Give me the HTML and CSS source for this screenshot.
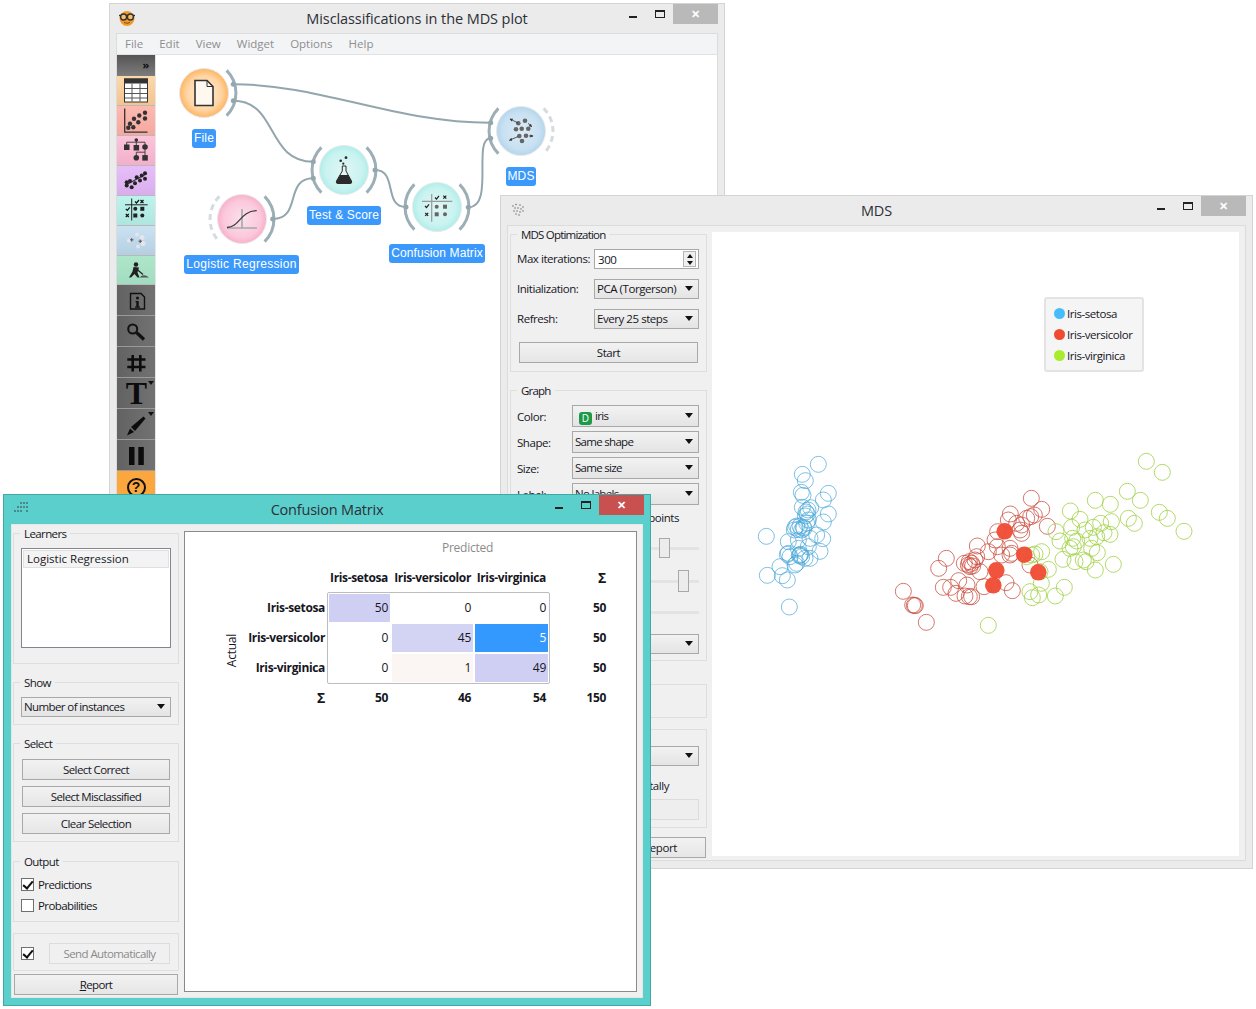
FILE: index.html
```html
<!DOCTYPE html>
<html lang="en">
<head>
<meta charset="utf-8">
<title>Misclassifications in the MDS plot</title>
<link rel="stylesheet" href="styles.css">
</head>
<body>
<div class="desktop">

<section class="win win-canvas">
  <header class="titlebar">
    <svg class="logo" viewBox="0 0 18 18" width="18" height="18"><circle cx="9" cy="9.500" r="7.500" fill="#f09a2c"/><path d="M1 6.500h16" stroke="#333" stroke-width="1.400"/><circle cx="5.600" cy="8" r="3" fill="#f8c070" stroke="#333" stroke-width="1.400"/><circle cx="12.400" cy="8" r="3" fill="#f8c070" stroke="#333" stroke-width="1.400"/><path d="M6 13.500q3 1.500 6 0" stroke="#8a4a10" fill="none"/></svg>
    <h1 class="title">Misclassifications in the MDS plot</h1>
    <div class="ctls"><i class="c-min"></i><i class="c-max"></i><b class="c-close idle">&#x2715;</b></div>
  </header>
  <div class="canvas-body">
    <nav class="menu"><span>File</span><span>Edit</span><span>View</span><span>Widget</span><span>Options</span><span>Help</span></nav>
    <div class="workspace">
      <aside class="dock">
        <div class="tool t-head"><span class="more">&raquo;</span></div>
        <div class="tool t-data"><svg class="ti" viewBox="117 76 38 29"><rect x="124.500" y="78.500" width="23" height="23" fill="#fff" stroke="#333"/><rect x="124" y="78" width="24" height="5" fill="#333"/><path d="M132 83v18M140 83v18M125 88h22M125 93h22M125 97.500h22" stroke="#555"/></svg></div>
        <div class="tool t-vis"><svg class="ti" viewBox="117 106 38 29"><path d="M124.700 108V131.700H147.500" fill="none" stroke="#333" stroke-width="1.300"/><g fill="#333"><circle cx="145" cy="112.300" r="2.200"/><circle cx="139.300" cy="115" r="2.200"/><circle cx="145" cy="118" r="2.200"/><circle cx="134" cy="118.300" r="2.200"/><circle cx="138.300" cy="121.700" r="2.200"/><circle cx="130" cy="123.300" r="2.200"/><circle cx="133.300" cy="126.700" r="2.200"/><circle cx="128.300" cy="127.300" r="2.200"/></g></svg></div>
        <div class="tool t-model"><svg class="ti" viewBox="117 136 38 29"><path d="M136.300 139v8M126.700 141.700H145V147M126.700 141.700V147M145 148v9M136.300 151.700H145M136.300 151.700V157" fill="none" stroke="#444"/><g fill="#333"><circle cx="136.300" cy="139.500" r="1.800"/><rect x="124" y="144" width="5.500" height="5.500"/><rect x="133.600" y="144.500" width="5.500" height="5.500"/><circle cx="145" cy="146.500" r="2.800"/><circle cx="136.300" cy="157.300" r="2.800"/><rect x="142.300" y="154.600" width="5.500" height="5.500"/></g></svg></div>
        <div class="tool t-unsup"><svg class="ti" viewBox="117 166 38 29"><path d="M125 185L147 173" stroke="#333" stroke-width="1.200"/><g fill="#222"><circle cx="126.700" cy="181.700" r="2"/><circle cx="131.700" cy="186.700" r="2"/><circle cx="130" cy="180.500" r="2"/><circle cx="135" cy="182.700" r="2"/><circle cx="136.700" cy="176.700" r="2"/><circle cx="140" cy="180" r="2"/><circle cx="141.700" cy="175" r="2"/><circle cx="145" cy="172.700" r="2"/><circle cx="145" cy="178.300" r="2"/><circle cx="126.700" cy="185" r="2"/></g></svg></div>
        <div class="tool t-eval"><svg class="ti" viewBox="117 196 38 29"><path d="M131.700 198V220M125 204.300H147.700" stroke="#222"/><path d="M135 201l1.500 1.500 2.500-3M125.800 208.300l1.500 1.500 2.500-3" fill="none" stroke="#111" stroke-width="1.200"/><path d="M140.500 199.500l3 3M143.500 199.500l-3 3M125.800 213.500l3 3M128.800 213.500l-3 3" stroke="#111" stroke-width="1.200"/><g fill="#222"><circle cx="135.300" cy="208.300" r="2"/><rect x="140.300" y="206.300" width="4" height="4"/><rect x="133.300" y="213" width="4" height="4"/><circle cx="142.300" cy="215" r="2"/></g></svg></div>
        <div class="tool t-blue"><svg class="ti" viewBox="117 226 38 29"><g fill="#e2e6ea"><circle cx="129" cy="240" r="2"/><circle cx="137" cy="234" r="2"/><circle cx="142" cy="237" r="2.500"/><circle cx="143" cy="243" r="2.500"/><circle cx="138" cy="246" r="2"/></g><path d="M130 239.300h3.500M131.700 237.600v3.500M138.500 240.700h3.500M140.200 239v3.500" stroke="#555"/></svg></div>
        <div class="tool t-green"><svg class="ti" viewBox="117 256 38 29"><circle cx="136" cy="264" r="2.200" fill="#222"/><path d="M133.500 266.500L139 267 137.500 272 139.500 277H137.500L134.500 273.500 131 277H129L132.500 271Z" fill="#222"/><path d="M136 268L143 274" stroke="#222" stroke-width="1.200"/><path d="M139.500 277Q143.500 272.500 149 277Z" fill="#555"/></svg></div>
        <div class="tool t-grey"><svg class="ti" viewBox="117 285 38 30"><path d="M130.500 293.500H141L144.500 297V309H130.500Z" fill="none" stroke="#111" stroke-width="1.400"/><circle cx="137.500" cy="298" r="1.500" fill="#111"/><path d="M135.500 301H138.700V306.500H140V307.700H135V306.500H136.300V302.200H135.500Z" fill="#111"/></svg></div>
        <div class="tool t-grey"><svg class="ti" viewBox="117 316 38 30"><circle cx="132.700" cy="329" r="4.500" fill="none" stroke="#111" stroke-width="2"/><path d="M136.500 332.500L144 339.500" stroke="#111" stroke-width="3.200"/></svg></div>
        <div class="tool t-grey"><svg class="ti" viewBox="117 347 38 30"><path d="M132.700 355V371.500M140.300 355V371.500M127.300 359.500H145.500M127.300 367H145.500" stroke="#0c0c0c" stroke-width="2.600"/></svg></div>
        <div class="tool t-grey"><svg class="ti" viewBox="117 378 38 30"><text x="136.500" y="404" class="t-glyph">T</text><path d="M148 381h6l-3 4z" fill="#111"/></svg></div>
        <div class="tool t-grey"><svg class="ti" viewBox="117 409 38 30"><path d="M143.500 416.500L145.500 418.500 135 431 131 427Z" fill="#0c0c0c"/><path d="M130 428.500L127 435.500 134 432Z" fill="#0c0c0c"/><path d="M148 412h6l-3 4z" fill="#111"/></svg></div>
        <div class="tool t-grey"><svg class="ti" viewBox="117 440 38 30"><rect x="129" y="447" width="5.500" height="18" fill="#0c0c0c"/><rect x="138.300" y="447" width="5.500" height="18" fill="#0c0c0c"/></svg></div>
        <div class="tool t-help"><span class="q">?</span></div>
      </aside>
      <div class="diagram">
        <svg class="links" viewBox="156 55 561 460" width="561" height="460">
          <defs>
            <radialGradient id="g-orange"><stop offset="0" stop-color="#ffeedb"/><stop offset=".7" stop-color="#ffd5a4"/><stop offset="1" stop-color="#ffb560"/></radialGradient>
            <radialGradient id="g-teal"><stop offset="0" stop-color="#e0f6f5"/><stop offset=".75" stop-color="#c9f3f0"/><stop offset="1" stop-color="#aeeeea"/></radialGradient>
            <radialGradient id="g-pink"><stop offset="0" stop-color="#fce0ea"/><stop offset=".75" stop-color="#fbc8db"/><stop offset="1" stop-color="#f9afcb"/></radialGradient>
            <radialGradient id="g-blue"><stop offset="0" stop-color="#dcecf6"/><stop offset=".75" stop-color="#c8e0f1"/><stop offset="1" stop-color="#b2d6ed"/></radialGradient>
            <marker id="ah" viewBox="0 0 6 6" refX="5" refY="3" markerWidth="4" markerHeight="4" orient="auto"><path d="M0 0L6 3L0 6Z" fill="#333"/></marker>
          </defs>
          <g class="link">
            <path d="M233.300 84.300C320 84 395 123 490.700 122.700"/>
            <path d="M233.300 100.700C278 100.700 266 161.700 313.300 161.700"/>
            <path d="M272.700 219C302 219 284 178.300 313.300 178.300"/>
            <path d="M375 170C398 170 383 207 406 207"/>
            <path d="M468.300 207.300C495 207 472 138.300 490.700 138.300"/>
          </g>
          <g class="arc">
            <path d="M226.600 70.400A32 32 0 0 1 226.600 115.600"/>
            <path d="M321.400 147.400A32 32 0 0 0 321.400 192.600"/>
            <path d="M366.600 147.400A32 32 0 0 1 366.600 192.600"/>
            <path d="M264.600 196.400A32 32 0 0 1 264.600 241.600"/>
            <path d="M414.400 184.400A32 32 0 0 0 414.400 229.600"/>
            <path d="M459.600 184.400A32 32 0 0 1 459.600 229.600"/>
            <path d="M498.400 108.400A32 32 0 0 0 498.400 153.600"/>
          </g>
          <g class="arc-off">
            <path d="M219.400 196.400A32 32 0 0 0 219.400 241.600"/>
            <path d="M543.600 108.400A32 32 0 0 1 543.600 153.600"/>
          </g>
          <g class="anchor">
            <circle cx="233.300" cy="84.300" r="2.500"/><circle cx="233.300" cy="100.700" r="2.500"/>
            <circle cx="313.300" cy="161.700" r="2.500"/><circle cx="313.300" cy="178.300" r="2.500"/><circle cx="375" cy="170" r="2.500"/>
            <circle cx="272.700" cy="219" r="2.500"/><circle cx="406" cy="207" r="2.500"/><circle cx="468.300" cy="207.300" r="2.500"/>
            <circle cx="490.700" cy="122.700" r="2.500"/><circle cx="490.700" cy="138.300" r="2.500"/>
          </g>
          <g class="node">
            <circle cx="204" cy="93" r="24.500" fill="url(#g-orange)"/>
            <circle cx="344" cy="170" r="24.500" fill="url(#g-teal)"/>
            <circle cx="242" cy="219" r="24.500" fill="url(#g-pink)"/>
            <circle cx="437" cy="207" r="24.500" fill="url(#g-teal)"/>
            <circle cx="521" cy="131" r="24.500" fill="url(#g-blue)"/>
          </g>
          <path d="M195 80.500H207L213 86.500V105.500H195Z" fill="#fff8ee" stroke="#333" stroke-width="1.600"/>
          <path d="M207 80.500V86.500H213" fill="none" stroke="#333"/>
          <g fill="#2b2b2b"><circle cx="340.700" cy="160.700" r="1.300"/><circle cx="346" cy="157.700" r="1.400"/><circle cx="343.300" cy="163.700" r="1.100"/></g>
          <path d="M342.300 166H346V171L351.500 181Q352.500 183.500 350 183.500H338Q335.500 183.500 336.500 181L342.300 171Z" fill="#e0f6f5" stroke="#2b2b2b"/>
          <path d="M340 175H348L351.500 181Q352.500 183.500 350 183.500H338Q335.500 183.500 336.500 181Z" fill="#2b2b2b"/>
          <path d="M242 209V228.500M227 228H257" stroke="#a3a9ab" stroke-width="1.600" fill="none"/>
          <path d="M227 227.500C240 227 240 211 256.700 210.700" stroke="#3c3c3c" stroke-width="1.300" fill="none"/>
          <path d="M431.700 194V221.700M422 201.300H452.300" stroke="#999" stroke-width="1.200"/>
          <path d="M435 197.500l1.500 1.500 2.500-3.200M425 206l1.500 1.500 2.500-3.200" fill="none" stroke="#222" stroke-width="1.200"/>
          <path d="M443.300 195.700l3 3M446.300 195.700l-3 3M425.200 212.800l3 3M428.200 212.800l-3 3" stroke="#222" stroke-width="1.200"/>
          <g fill="#666"><circle cx="436.700" cy="206.700" r="2"/><rect x="443" y="204.700" width="4" height="4"/><rect x="434.700" y="212.300" width="4" height="4"/><circle cx="445" cy="214.300" r="2"/></g>
          <g fill="#666"><circle cx="525" cy="120.700" r="2.300"/><circle cx="518.300" cy="123.300" r="2.300"/><circle cx="516" cy="129.300" r="2.300"/><circle cx="521.700" cy="128.700" r="2.300"/><circle cx="528.300" cy="128.700" r="2.300"/><circle cx="519.300" cy="136" r="2.300"/><circle cx="526" cy="135.700" r="2.300"/><circle cx="522" cy="141" r="2.300"/></g>
          <g stroke="#333" stroke-width=".8" marker-end="url(#ah)"><path d="M518 123L510 119"/><path d="M528 123.300L531.700 126.700"/><path d="M529 136H533"/><path d="M518 136.500L509.500 140.300"/></g>
        </svg>
        <span class="tag tag-file">File</span>
        <span class="tag tag-test">Test &amp; Score</span>
        <span class="tag tag-lr">Logistic Regression</span>
        <span class="tag tag-cm">Confusion Matrix</span>
        <span class="tag tag-mds">MDS</span>
      </div>
    </div>
  </div>
</section>

<section class="win win-mds">
  <header class="titlebar">
    <svg class="small-icon" viewBox="0 0 14 14" width="14" height="14"><g fill="#777"><circle cx="2" cy="3" r=".8"/><circle cx="5" cy="1.500" r=".8"/><circle cx="9" cy="2" r=".8"/><circle cx="12" cy="4" r=".8"/><circle cx="4" cy="5" r=".8"/><circle cx="7" cy="5" r=".8"/><circle cx="10" cy="6" r=".8"/><circle cx="3" cy="8" r=".8"/><circle cx="6" cy="8" r=".8"/><circle cx="9" cy="9" r=".8"/><circle cx="12" cy="8" r=".8"/><circle cx="5" cy="11" r=".8"/><circle cx="8" cy="12" r=".8"/></g></svg>
    <h1 class="title">MDS</h1>
    <div class="ctls"><i class="c-min"></i><i class="c-max"></i><b class="c-close idle">&#x2715;</b></div>
  </header>
  <div class="mds-body">
    <div class="mds-side">
      <fieldset class="grp g-opt">
        <legend>MDS Optimization</legend>
        <div class="frow"><label>Max iterations:</label><div class="spin"><span>300</span><span class="spin-btns"><i class="up"></i><i class="dn"></i></span></div></div>
        <div class="frow"><label>Initialization:</label><div class="combo">PCA (Torgerson)</div></div>
        <div class="frow"><label>Refresh:</label><div class="combo">Every 25 steps</div></div>
        <button class="btn start">Start</button>
      </fieldset>
      <fieldset class="grp g-graph">
        <legend>Graph</legend>
        <div class="grow"><label>Color:</label><div class="combo tall"><span class="d-badge">D</span>iris</div></div>
        <div class="grow"><label>Shape:</label><div class="combo tall">Same shape</div></div>
        <div class="grow"><label>Size:</label><div class="combo tall">Same size</div></div>
        <div class="grow"><label>Label:</label><div class="combo tall">No labels</div></div>
        <div class="only">points</div>
        <div class="slider s1"><i class="handle"></i></div>
        <div class="slider s2"><i class="handle"></i></div>
        <div class="slider s3"></div>
        <div class="combo low"></div>
      </fieldset>
      <fieldset class="grp g-zoom"></fieldset>
      <fieldset class="grp g-out">
        <div class="combo out-combo"></div>
        <div class="auto-text">tally</div>
        <div class="dis-box"></div>
      </fieldset>
      <button class="btn mds-report">Report</button>
    </div>
    <div class="plot">
      <svg class="scatter" viewBox="712 232 527 624" width="527" height="624">
        <g class="pts blue" transform="translate(740 440) scale(.33333)">
          <circle cx="235" cy="73"/><circle cx="187" cy="103"/><circle cx="196" cy="122"/><circle cx="265" cy="160"/><circle cx="184" cy="157"/><circle cx="189" cy="166"/><circle cx="250" cy="180"/><circle cx="187" cy="202"/><circle cx="212" cy="203"/><circle cx="204" cy="210"/><circle cx="198" cy="216"/><circle cx="202" cy="222"/><circle cx="196" cy="228"/><circle cx="265" cy="222"/><circle cx="250" cy="246"/><circle cx="170" cy="258"/><circle cx="165" cy="262"/><circle cx="180" cy="258"/><circle cx="190" cy="262"/><circle cx="200" cy="250"/><circle cx="185" cy="270"/><circle cx="175" cy="268"/><circle cx="192" cy="265"/><circle cx="205" cy="240"/><circle cx="79" cy="289"/><circle cx="163" cy="270"/><circle cx="248" cy="296"/><circle cx="230" cy="285"/><circle cx="210" cy="295"/><circle cx="175" cy="300"/><circle cx="145" cy="305"/><circle cx="240" cy="334"/><circle cx="145" cy="340"/><circle cx="142" cy="343"/><circle cx="180" cy="345"/><circle cx="182" cy="343"/><circle cx="178" cy="347"/><circle cx="185" cy="350"/><circle cx="170" cy="370"/><circle cx="120" cy="380"/><circle cx="210" cy="355"/><circle cx="195" cy="355"/><circle cx="165" cy="375"/><circle cx="150" cy="350"/><circle cx="82" cy="406"/><circle cx="127" cy="407"/><circle cx="142" cy="420"/><circle cx="148" cy="501"/><circle cx="205" cy="320"/><circle cx="175" cy="325"/>
        </g>
        <g class="pts red" transform="translate(880 440) scale(.33333)">
          <circle cx="70" cy="454"/><circle cx="98" cy="495"/><circle cx="103" cy="496"/><circle cx="106" cy="497"/><circle cx="139" cy="547"/><circle cx="176" cy="385"/><circle cx="199" cy="355"/><circle cx="190" cy="442"/><circle cx="212" cy="442"/><circle cx="228" cy="460"/><circle cx="236" cy="422"/><circle cx="255" cy="468"/><circle cx="268" cy="470"/><circle cx="275" cy="470"/><circle cx="261" cy="435"/><circle cx="253" cy="370"/><circle cx="268" cy="365"/><circle cx="275" cy="370"/><circle cx="285" cy="360"/><circle cx="290" cy="350"/><circle cx="270" cy="380"/><circle cx="265" cy="375"/><circle cx="278" cy="378"/><circle cx="292" cy="318"/><circle cx="300" cy="395"/><circle cx="325" cy="335"/><circle cx="312" cy="440"/><circle cx="352" cy="320"/><circle cx="345" cy="300"/><circle cx="378" cy="428"/><circle cx="397" cy="452"/><circle cx="365" cy="345"/><circle cx="390" cy="345"/><circle cx="395" cy="340"/><circle cx="390" cy="325"/><circle cx="353" cy="275"/><circle cx="385" cy="240"/><circle cx="391" cy="222"/><circle cx="410" cy="250"/><circle cx="425" cy="255"/><circle cx="425" cy="280"/><circle cx="420" cy="270"/><circle cx="440" cy="235"/><circle cx="452" cy="230"/><circle cx="463" cy="225"/><circle cx="485" cy="208"/><circle cx="454" cy="175"/><circle cx="502" cy="259"/><circle cx="450" cy="375"/>
        </g>
        <g class="pts green" transform="translate(880 440) scale(.33333)">
          <circle cx="799" cy="64"/><circle cx="847" cy="97"/><circle cx="742" cy="154"/><circle cx="646" cy="181"/><circle cx="691" cy="193"/><circle cx="781" cy="181"/><circle cx="838" cy="217"/><circle cx="862" cy="235"/><circle cx="912" cy="274"/><circle cx="745" cy="235"/><circle cx="763" cy="250"/><circle cx="694" cy="245"/><circle cx="662" cy="250"/><circle cx="640" cy="262"/><circle cx="615" cy="270"/><circle cx="600" cy="238"/><circle cx="571" cy="213"/><circle cx="528" cy="275"/><circle cx="540" cy="303"/><circle cx="575" cy="262"/><circle cx="578" cy="295"/><circle cx="590" cy="303"/><circle cx="580" cy="320"/><circle cx="570" cy="325"/><circle cx="635" cy="325"/><circle cx="652" cy="338"/><circle cx="690" cy="283"/><circle cx="672" cy="278"/><circle cx="650" cy="290"/><circle cx="630" cy="295"/><circle cx="549" cy="358"/><circle cx="585" cy="365"/><circle cx="610" cy="360"/><circle cx="618" cy="365"/><circle cx="646" cy="390"/><circle cx="700" cy="373"/><circle cx="505" cy="388"/><circle cx="485" cy="335"/><circle cx="465" cy="342"/><circle cx="455" cy="345"/><circle cx="440" cy="350"/><circle cx="484" cy="430"/><circle cx="450" cy="455"/><circle cx="476" cy="465"/><circle cx="457" cy="473"/><circle cx="526" cy="468"/><circle cx="553" cy="442"/><circle cx="325" cy="556"/><circle cx="480" cy="395"/>
        </g>
        <g class="hits">
          <circle cx="1004.700" cy="531.300" r="8.300"/><circle cx="1024.300" cy="554.700" r="8.300"/><circle cx="996.300" cy="570.300" r="8.300"/><circle cx="993.300" cy="585.300" r="8.300"/><circle cx="1038.300" cy="572.300" r="8.300"/>
        </g>
      </svg>
      <div class="legend-box">
        <div class="leg"><i class="dot d-s"></i>Iris-setosa</div>
        <div class="leg"><i class="dot d-v"></i>Iris-versicolor</div>
        <div class="leg"><i class="dot d-g"></i>Iris-virginica</div>
      </div>
    </div>
  </div>
</section>

<section class="win win-cm">
  <header class="titlebar">
    <svg class="small-icon cm-icon" viewBox="0 0 14 14" width="14" height="14"><g fill="#4a6f70"><circle cx="7" cy="2" r="1"/><circle cx="10" cy="2" r="1"/><circle cx="13" cy="2" r="1"/><circle cx="4" cy="6" r="1"/><circle cx="7" cy="6" r="1"/><circle cx="10" cy="6" r="1"/><circle cx="13" cy="6" r="1"/><circle cx="1" cy="10" r="1"/><circle cx="4" cy="10" r="1"/><circle cx="7" cy="10" r="1"/><circle cx="13" cy="10" r="1"/></g></svg>
    <h1 class="title">Confusion Matrix</h1>
    <div class="ctls"><i class="c-min"></i><i class="c-max"></i><b class="c-close alert">&#x2715;</b></div>
  </header>
  <div class="cm-body">
    <div class="cm-side">
      <fieldset class="grp g-learn">
        <legend>Learners</legend>
        <div class="listbox"><div class="list-item">Logistic Regression</div></div>
      </fieldset>
      <fieldset class="grp g-show">
        <legend>Show</legend>
        <div class="combo">Number of instances</div>
      </fieldset>
      <fieldset class="grp g-sel">
        <legend>Select</legend>
        <button class="btn">Select Correct</button>
        <button class="btn">Select Misclassified</button>
        <button class="btn">Clear Selection</button>
      </fieldset>
      <fieldset class="grp g-output">
        <legend>Output</legend>
        <div class="chk"><i class="box on"></i>Predictions</div>
        <div class="chk"><i class="box"></i>Probabilities</div>
      </fieldset>
      <div class="grp g-auto">
        <i class="box on"></i>
        <button class="btn off">Send Automatically</button>
      </div>
      <button class="btn cm-report"><u>R</u>eport</button>
    </div>
    <div class="cm-main">
      <div class="matrix">
        <div class="predicted">Predicted</div>
        <div class="actual"><span>Actual</span></div>
        <div class="frame">
          <div class="cell c-hi">50</div><div class="cell">0</div><div class="cell">0</div>
          <div class="cell">0</div><div class="cell c-hi2">45</div><div class="cell c-sel">5</div>
          <div class="cell">0</div><div class="cell c-lo">1</div><div class="cell c-hi">49</div>
        </div>
        <div class="corner"></div>
        <div class="h hc">Iris-setosa</div><div class="h hc">Iris-versicolor</div><div class="h hc">Iris-virginica</div><div class="h hc s sig">&Sigma;</div>
        <div class="h r">Iris-setosa</div><div class="h s">50</div>
        <div class="h r">Iris-versicolor</div><div class="h s">50</div>
        <div class="h r">Iris-virginica</div><div class="h s">50</div>
        <div class="h r sig">&Sigma;</div><div class="h">50</div><div class="h">46</div><div class="h">54</div><div class="h s">150</div>
      </div>
    </div>
  </div>
</section>

</div>
</body>
</html>
```
FILE: styles.css
```css
* { box-sizing: border-box; }
html, body { margin: 0; padding: 0; background: #fff; }
body { font-family: "Open Sans", "Noto Sans", sans-serif; font-size: 11.5px; letter-spacing: -.25px; color: #16161e; }
.desktop { position: relative; width: 1256px; height: 1009px; overflow: hidden; }

/* windows on the desktop */
.win { position: absolute; border: 1px solid #d4d4d4; background: #ebebeb; display: flex; flex-direction: column; }
.win-canvas { left: 109px; top: 3px; width: 616px; height: 510px; z-index: 1; }
.win-mds { left: 500px; top: 195px; width: 753px; height: 674px; z-index: 2; }
.win-cm { left: 3px; top: 494px; width: 648px; height: 512px; z-index: 3; background: #5bcfcb; border-color: #3fa9a6; }

.titlebar { display: grid; grid-template-columns: 1fr auto 1fr; align-items: start; height: 29px; flex: none; }
.title { margin: 0; font-weight: 400; font-size: 14.5px; line-height: 20px; padding-top: 5px; letter-spacing: -.09px; color: #2c3038; }
.win-cm .title { letter-spacing: -.2px; }
.logo { margin: 5px 0 0 8px; }
.small-icon { margin: 7px 0 0 10px; }
.cm-icon { margin: 6px 0 0 10px; }
.ctls { grid-column: 3; justify-self: end; display: flex; align-items: flex-start; margin-right: 6px; }
.c-min { width: 8px; height: 2px; background: #222; margin: 12px 18px 0 0; }
.c-max { width: 10px; height: 8px; border: 1px solid #222; border-top-width: 2px; margin: 6px 8px 0 0; }
.c-close { width: 45px; height: 20px; color: #fff; font-weight: 700; font-size: 11px; line-height: 20px; text-align: center; }
.c-close.idle { background: #b9b9b9; }
.c-close.alert { background: #c8504f; }

/* canvas window */
.canvas-body { margin: 0 6px; flex: 1; min-height: 0; border: 1px solid #dcdcdc; border-bottom: 0; background: #fff; display: flex; flex-direction: column; }
.menu { display: flex; gap: 16px; height: 21px; flex: none; padding: 0 0 2px 8px; align-items: center; background: #f3f4f6; border-bottom: 1px solid #e2e2e2; color: #8e8e8e; font-size: 11.5px; letter-spacing: 0; }
.workspace { display: flex; flex: 1; min-height: 0; }
.dock { width: 39px; flex: none; border-right: 1px solid #e6e6e6; background: #ebebeb; display: flex; flex-direction: column; }
.tool { height: 31px; flex: none; border-bottom: 1px solid #b9b9b9; display: block; }
.ti { width: 38px; height: 30px; display: block; overflow: visible; }
.t-head { height: 21px; background: linear-gradient(#555, #7c7c7c); text-align: right; border: 0; }
.more { color: #111; font-size: 11px; line-height: 20px; padding-right: 6px; font-weight: 700; }
.t-data { height: 30px; background: linear-gradient(#fbd9ab, #f3c48f); }
.t-vis { height: 30px; background: linear-gradient(#fdb9b0, #f5a9a0); }
.t-model { height: 30px; background: linear-gradient(#fdc4da, #f3afca); }
.t-unsup { height: 30px; background: linear-gradient(#e6bff9, #d9adee); }
.t-eval { height: 30px; background: linear-gradient(#bdf3ec, #aee6df); }
.t-blue { height: 30px; background: linear-gradient(#cbe2f2, #b5cfe2); }
.t-green { height: 29px; background: linear-gradient(#aee6ca, #a2dcc0); }
.t-grey { background: linear-gradient(90deg, #626262, #727272); border-bottom-color: #9a9a9a; }
.t-help { height: 40px; background: #fca63e; border: 0; text-align: center; }
.q { display: inline-block; width: 19px; height: 19px; margin-top: 7px; border: 2px solid #111; border-radius: 50%; font: 700 14px/15px "Liberation Sans", sans-serif; color: #111; letter-spacing: 0; }
.t-glyph { font: 700 32px "Liberation Serif", serif; text-anchor: middle; fill: #0c0c0c; letter-spacing: 0; }

.diagram { position: relative; flex: 1; min-width: 0; background: #fff; overflow: hidden; }
.links { display: block; }
.link path { fill: none; stroke: #93a6ae; stroke-width: 2; }
.arc path { fill: none; stroke: #9caeb6; stroke-width: 3; }
.arc-off path { fill: none; stroke: #d4dcdf; stroke-width: 3; stroke-dasharray: 6 4; }
.anchor circle { fill: #93a6ae; }
.node circle { stroke: #e9e9e9; stroke-width: 1; }
.tag { position: absolute; height: 19px; padding: 0; background: #3b99fc; color: #fff; border-radius: 3px; font: 12px/19px "Liberation Sans", sans-serif; letter-spacing: .18px; white-space: nowrap; }
.tag-file { left: 36px; top: 74px; width: 24px; text-align: center; }
.tag-test { left: 151px; top: 151px; width: 74px; text-align: center; }
.tag-lr { left: 28px; top: 200px; width: 115px; text-align: center; letter-spacing: .3px; }
.tag-cm { left: 233px; top: 189px; width: 96px; text-align: center; letter-spacing: .1px; }
.tag-mds { left: 350px; top: 112px; width: 30px; text-align: center; }

/* shared controls */
.grp { margin: 0; min-width: 0; border: 1px solid #dedede; padding: 0; background: #f0f0f0; }
.grp legend { margin-left: 0; padding: 0 4px; height: 16px; line-height: 18px; color: #16161e; }
.combo { position: relative; height: 20px; line-height: 18px; padding-left: 2px; border: 1px solid #a8a8a8; background: linear-gradient(#f2f2f2, #e4e4e4); white-space: nowrap; overflow: hidden; }
.combo::after { content: ""; position: absolute; right: 5px; top: 6px; border: 4px solid transparent; border-top: 5px solid #111; border-bottom: 0; }
.btn { display: block; font: inherit; letter-spacing: inherit; color: inherit; height: 21px; padding: 0; border: 1px solid #a8a8a8; background: linear-gradient(#f2f2f2, #e6e6e6); text-align: center; }
.btn.off { color: #8b8b8b; background: #f0f0f0; border-color: #dcdcdc; }

/* MDS window */
.mds-body { margin: 0 6px 7px; flex: 1; min-height: 0; border: 1px solid #dcdcdc; background: #f0f0f0; display: flex; padding: 0 6px 5px 2px; }
.mds-side { width: 197px; flex: none; margin-right: 5px; display: flex; flex-direction: column; align-items: flex-start; letter-spacing: -.45px; }
.mds-side > * { flex: none; }
.mds-side .grp { width: 197px; }
.mds-side legend { letter-spacing: -.8px; }
.g-opt { height: 146px; padding: 7px 7px 0 6px; }
.frow { display: flex; align-items: center; height: 20px; margin-bottom: 10px; }
.frow label { width: 77px; flex: none; padding-bottom: 2px; }
.frow .combo, .spin { width: 105px; }
.spin { display: flex; justify-content: space-between; align-items: center; height: 20px; padding: 0 2px 0 3px; border: 1px solid #a8a8a8; background: #fff; }
.spin-btns { width: 13px; height: 16px; display: flex; flex-direction: column; align-items: center; justify-content: space-around; border: 1px solid #b5b5b5; background: #efefef; }
.up { border: 3px solid transparent; border-top: 0; border-bottom: 4px solid #111; }
.dn { border: 3px solid transparent; border-bottom: 0; border-top: 4px solid #111; }
.start { width: 179px; margin: 13px 0 0 2px; }
.g-graph { margin-top: 10px; height: 279px; padding: 7px 7px 0 6px; }
.grow { display: flex; align-items: center; height: 22px; margin-bottom: 4px; }
.grow label { width: 55px; flex: none; }
.combo.tall { width: 127px; height: 22px; line-height: 20px; letter-spacing: -.7px; }
.combo.tall::after { top: 7px; }
.d-badge { display: inline-block; width: 13px; height: 13px; margin: 0 3px 0 4px; border-radius: 3px; background: #1d9a48; color: #fff; font-size: 10px; line-height: 13px; text-align: center; vertical-align: -2px; letter-spacing: 0; }
.only { width: 162px; height: 18px; line-height: 18px; text-align: right; margin-top: 0; font-size: 11.5px; }
.slider { width: 127px; margin-left: 55px; display: flex; background: linear-gradient(#e3e3e3, #e3e3e3) center / 100% 3px no-repeat; }
.handle { display: block; width: 11px; border: 1px solid #a8a8a8; background: #ececec; }
.s1 { height: 20px; margin-top: 11px; padding-left: 87px; }
.s2 { height: 22px; margin-top: 12px; padding-left: 106px; }
.s3 { height: 22px; margin-top: 9px; }
.combo.low { width: 127px; margin: 11px 0 0 55px; }
.g-zoom { margin-top: 23px; height: 34px; }
.g-out { margin-top: 11px; height: 99px; padding: 16px 7px 0 6px; }
.out-combo { width: 127px; margin-left: 55px; }
.auto-text { width: 152px; text-align: right; height: 24px; line-height: 24px; margin-top: 8px; white-space: nowrap; }
.dis-box { width: 127px; height: 21px; margin: 1px 0 0 55px; border: 1px solid #dcdcdc; background: #eee; }
.mds-report { width: 92px; margin: 9px 0 0 104px; }
.plot { position: relative; margin-top: 6px; width: 527px; height: 624px; background: #fff; flex: none; }
.scatter { display: block; }
.pts circle { r: 24px; fill: none; stroke-width: 3; }
.pts.blue circle { stroke: #46a5d8; stroke-opacity: .7; }
.pts.red circle { stroke: #c8483a; stroke-opacity: .75; }
.pts.green circle { stroke: #a0d144; stroke-opacity: .8; }
.hits circle { fill: #f04b33; fill-opacity: .95; }
.legend-box { position: absolute; left: 332px; top: 65px; width: 100px; height: 75px; padding: 4px 0 0 8px; background: #f5f5f5; border: 2px solid #e3e3e3; border-radius: 3px; letter-spacing: -.45px; }
.leg { display: flex; align-items: center; height: 21px; gap: 2px; white-space: nowrap; }
.dot { width: 11px; height: 11px; border-radius: 50%; flex: none; }
.d-s { background: #46bdfb; }
.d-v { background: #f04b30; }
.d-g { background: #a9ec2c; }

/* confusion matrix window */
.cm-body { margin: 0 7px 7px; flex: 1; min-height: 0; border: 1px solid #e6e6e6; background: #f0f0f0; display: flex; padding-left: 1px; }
.cm-side { width: 166px; flex: none; margin-right: 5px; display: flex; flex-direction: column; align-items: stretch; letter-spacing: -.6px; }
.cm-side legend { margin-left: -1px; }
.g-learn { height: 139px; padding: 7px 7px 0; }
.listbox { height: 100px; border: 1px solid #85858f; background: #fff; padding: 1px; }
.list-item { height: 18px; line-height: 16px; padding-left: 3px; background: #f3f3f3; border: 1px solid #e0e0e0; letter-spacing: 0; }
.g-show { margin-top: 10px; height: 51px; padding: 7px 7px 0; }
.g-sel { margin-top: 10px; height: 107px; padding: 8px 8px 0; }
.g-sel legend { margin-left: -2px; }
.g-sel .btn { width: 148px; margin-bottom: 6px; }
.g-output { margin-top: 11px; height: 69px; padding: 5px 7px 0; }
.chk { display: flex; align-items: center; height: 21px; gap: 4px; }
.box { position: relative; display: block; width: 13px; height: 13px; border: 1px solid #707070; background: #fff; flex: none; }
.box.on::after { content: ""; position: absolute; left: 3px; top: 0; width: 4px; height: 8px; border: solid #111; border-width: 0 2px 2px 0; transform: rotate(40deg); }
.g-auto { margin-top: 11px; height: 38px; padding: 2px 8px 0 7px; display: flex; align-items: center; justify-content: space-between; }
.g-auto .btn { width: 121px; margin-left: 14px; }
.cm-report { margin: 3px 0 0 1px; width: 164px; }
.cm-main { flex: none; width: 453px; height: 461px; margin-top: 6px; border: 1px solid #8a8a8a; background: #fff; padding: 6px 0 0 35px; }
.matrix { display: grid; grid-template-columns: 20px 85px 61px 81px 73px 56px; grid-template-rows: 24px 28px 28px 28px 28px 30px; column-gap: 2px; row-gap: 2px; font-size: 12px; }
.predicted { grid-column: 3 / 7; grid-row: 1; text-align: center; color: #8b8b8b; line-height: 20px; }
.actual { grid-column: 1; grid-row: 3 / 7; display: flex; align-items: center; justify-content: center; padding: 0 0 6px 2px; }
.actual span { writing-mode: vertical-rl; transform: rotate(180deg); }
.frame { grid-column: 3 / 6; grid-row: 3 / 6; margin: -2px; border: 1px solid #bdbdbd; border-radius: 2px; padding: 1px; display: grid; grid-template-columns: 61px 81px 73px; grid-template-rows: repeat(3, 28px); gap: 2px; }
.corner { grid-column: 1 / 3; grid-row: 1 / 3; }
.cell { text-align: right; padding-right: 2px; line-height: 28px; }
.c-hi { background: #cfcff3; }
.c-hi2 { background: #d3d3f4; }
.c-sel { background: #3399ff; color: #fff; }
.c-lo { background: #fbf5f4; }
.h { font-weight: 700; text-align: right; padding-right: 2px; line-height: 28px; white-space: nowrap; letter-spacing: -.35px; }
.hc { grid-row: 2; }
.h.r { grid-column: 2; }
.h.s { grid-column: 6; padding-right: 0; }
.sig { font-size: 14px; }
```
